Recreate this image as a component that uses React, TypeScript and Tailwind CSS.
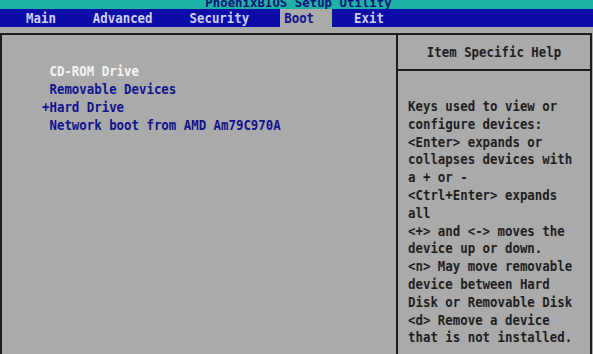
const font = { fontFamily: '"DejaVu Sans Mono", "Liberation Mono", monospace' };

const bootItems = [
  { text: " CD-ROM Drive", cls: "text-[#f4f4f4]" },
  { text: " Removable Devices", cls: "text-[#12128e]" },
  { text: "+Hard Drive", cls: "text-[#12128e]" },
  { text: " Network boot from AMD Am79C970A", cls: "text-[#12128e]" },
];

const help = [
  "Keys used to view or",
  "configure devices:",
  "<Enter> expands or",
  "collapses devices with",
  "a + or -",
  "<Ctrl+Enter> expands",
  "all",
  "<+> and <-> moves the",
  "device up or down.",
  "<n> May move removable",
  "device between Hard",
  "Disk or Removable Disk",
  "<d> Remove a device",
  "that is not installed.",
];

// BIOS glyphs are taller than DejaVu's, stretch each line a bit
const tall = "inline-block scale-y-[1.16]";

export default function App() {
  return (
    <div className="w-[593px] h-[354px] overflow-hidden bg-[#aaaaaa] text-[12.4px] leading-[17.8px] font-bold" style={font}>
      {/* title bar, cut off at the top */}
      <div className="h-[9px] overflow-hidden bg-[#1fb3a6] flex justify-center">
        <div className="-mt-[3px] leading-[12px] h-[12px] whitespace-pre text-[#12127a] pl-[4px]">PhoenixBIOS Setup Utility</div>
      </div>

      {/* menu */}
      <div className="h-[18px] bg-[#0c0ca8] flex leading-[18px] text-[#cfcff2] whitespace-pre">
        <span className={`ml-[26px] ${tall}`}>Main</span>
        <span className={`ml-[37px] ${tall}`}>Advanced</span>
        <span className={`ml-[37px] ${tall}`}>Security</span>
        <span className="ml-[31px] pl-[4px] pr-[18px] bg-[#aaaaaa] text-[#12128e]">
          <span className={tall}>Boot</span>
        </span>
        <span className={`ml-[22px] ${tall}`}>Exit</span>
      </div>

      {/* main box */}
      <div className="mt-[6px] w-[592px] h-[340px] border-2 border-[#1c1c1c] flex">
        <div className="w-[394px] pt-[27px] pl-[40px]">
          {bootItems.map((b) => (
            <div key={b.text} className={`whitespace-pre leading-[18px] ${b.cls}`}>
              <span className={tall}>{b.text}</span>
            </div>
          ))}
        </div>
        <div className="w-[2px] bg-[#1c1c1c]" />
        <div className="flex-1 flex flex-col text-[#1e1e1e]">
          <div className="h-[36px] flex items-center justify-center border-b-2 border-[#1c1c1c]">
            <span className={tall}>Item Specific Help</span>
          </div>
          <div className="pt-[26px] pl-[10px]">
            {help.map((l) => (
              <div key={l} className="whitespace-pre">
                <span className={tall}>{l}</span>
              </div>
            ))}
          </div>
        </div>
      </div>
    </div>
  );
}
